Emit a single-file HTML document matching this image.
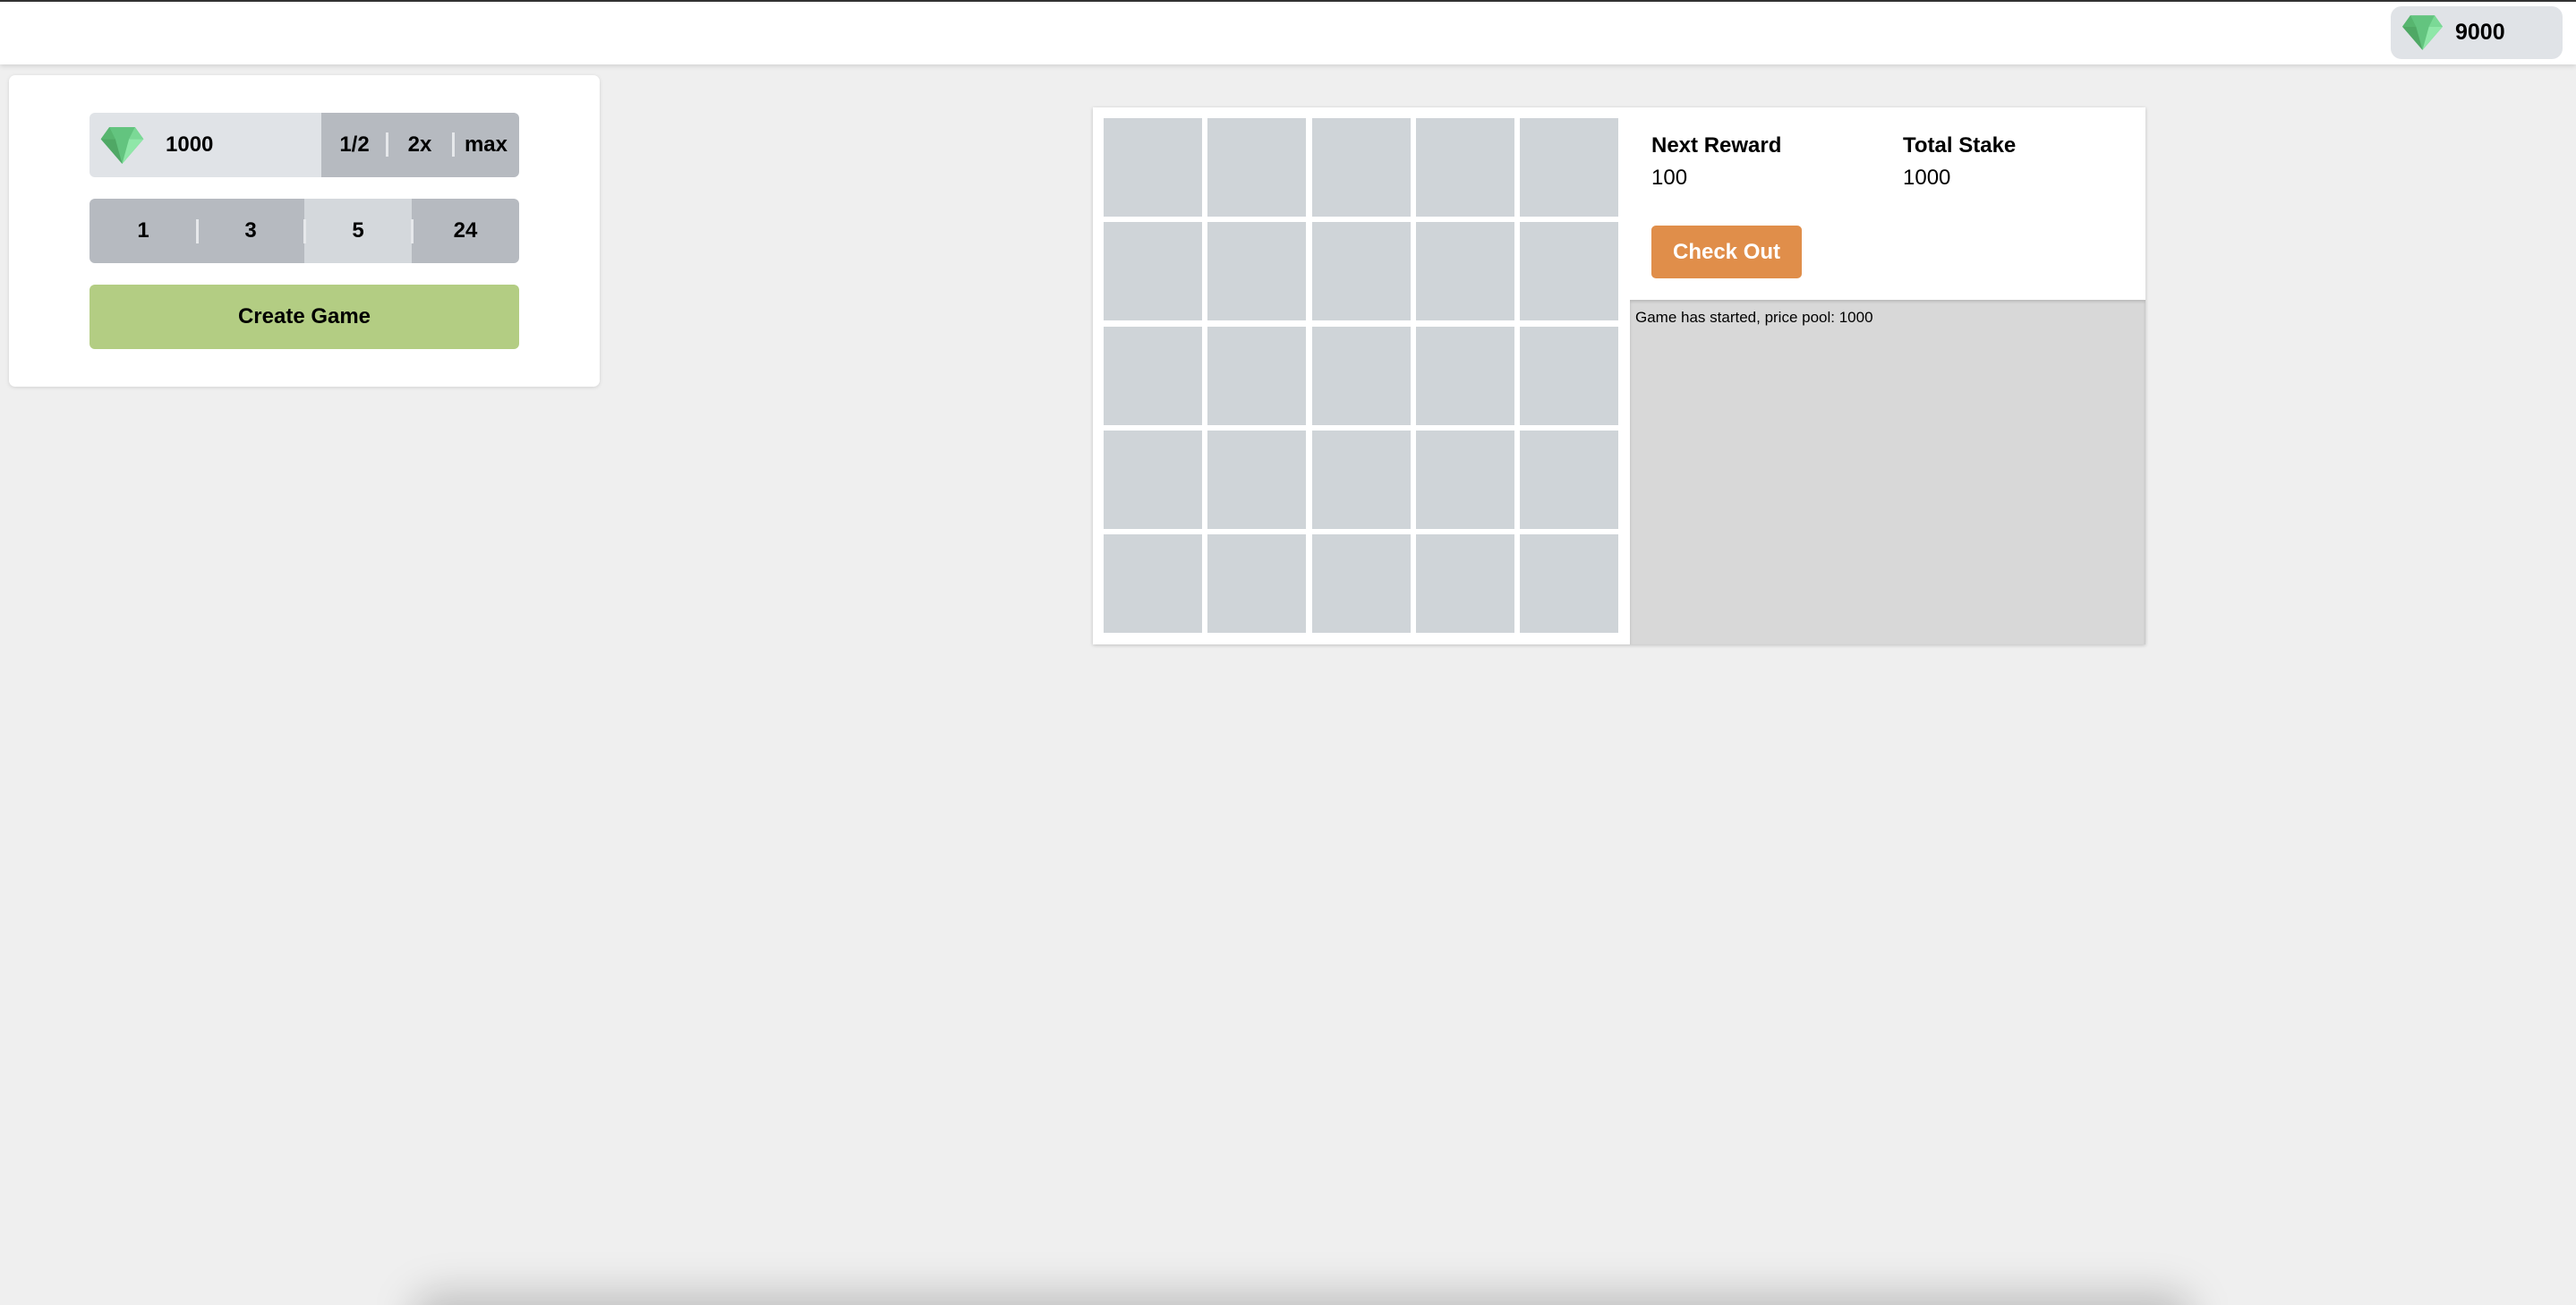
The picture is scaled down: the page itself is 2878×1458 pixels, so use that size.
<!DOCTYPE html>
<html style="width:2878px;height:1458px;overflow:hidden"><head><style>
*{box-sizing:border-box;margin:0;padding:0}
body{width:2878px;height:1458px;background:#efefef;font-family:"Liberation Sans",Arial,sans-serif;position:relative;overflow:hidden;color:#000}
.abs{position:absolute}
.top{left:0;top:0;width:2878px;height:72px;background:#fff;border-top:2px solid #333;box-shadow:0 2px 5px rgba(0,0,0,.12)}
.badge{left:2671px;top:7px;width:192px;height:59px;background:#e0e3e7;border-radius:12px}
.panel{left:10px;top:84px;width:660px;height:348px;background:#fff;border-radius:7px;box-shadow:0 1px 4px rgba(0,0,0,.12)}
.row{display:flex;align-items:center;justify-content:center;font-weight:bold;font-size:24px}
.sep{width:3px;height:27px;background:#e6e8eb}
.cell{position:absolute;width:110px;height:110px;background:#cfd4d8}
.clip{left:0;top:0;width:2878px;height:1458px;overflow:hidden}
.bot{left:460px;top:1445px;width:1990px;height:60px;background:rgba(0,0,0,.2);filter:blur(22px);border-radius:40px}
</style></head><body>
<div class="abs clip"><div class="abs bot"></div></div>
<div class="abs top"></div>
<div class="abs badge"></div>
<svg class="abs" style="left:2684px;top:17px" width="45" height="39" viewBox="0 0 50 43"><polygon points="10,0 40,0 50,14 25,43 0,14" fill="#63c47f"/><polygon points="0,14 25,43 17,14" fill="#4fa865"/><polygon points="33,14 50,14 25,43" fill="#8fe7a8"/><polygon points="10,0 17,14 0,14" fill="#57b56f"/><polygon points="40,0 50,14 33,14" fill="#7bd996"/></svg>
<div class="abs" style="left:2743px;top:22px;font-size:25px;font-weight:bold">9000</div>

<div class="abs panel"></div>
<div class="abs" style="left:100px;top:126px;width:259px;height:72px;background:#e0e3e7;border-radius:6px 0 0 6px"></div>
<div class="abs" style="left:359px;top:126px;width:221px;height:72px;background:#b6bac0;border-radius:0 6px 6px 0"></div>
<div class="abs row" style="left:366px;top:126px;width:60px;height:72px">1/2</div>
<div class="abs row" style="left:439px;top:126px;width:60px;height:72px">2x</div>
<div class="abs row" style="left:513px;top:126px;width:60px;height:72px">max</div>
<div class="abs sep" style="left:431px;top:148px"></div>
<div class="abs sep" style="left:505px;top:148px"></div>
<svg class="abs" style="left:112px;top:142px" width="49" height="41" viewBox="0 0 50 43"><polygon points="10,0 40,0 50,14 25,43 0,14" fill="#63c47f"/><polygon points="0,14 25,43 17,14" fill="#4fa865"/><polygon points="33,14 50,14 25,43" fill="#8fe7a8"/><polygon points="10,0 17,14 0,14" fill="#57b56f"/><polygon points="40,0 50,14 33,14" fill="#7bd996"/></svg>
<div class="abs" style="left:185px;top:148px;font-size:24px;font-weight:bold">1000</div>

<div class="abs row" style="left:100px;top:222px;width:120px;height:72px;background:#b6bac0;border-radius:6px 0 0 6px">1</div>
<div class="abs row" style="left:220px;top:222px;width:120px;height:72px;background:#b6bac0">3</div>
<div class="abs row" style="left:340px;top:222px;width:120px;height:72px;background:#d4d8dc">5</div>
<div class="abs row" style="left:460px;top:222px;width:120px;height:72px;background:#b6bac0;border-radius:0 6px 6px 0">24</div>
<div class="abs sep" style="left:219px;top:245px"></div>
<div class="abs sep" style="left:339px;top:245px"></div>
<div class="abs sep" style="left:459px;top:245px"></div>
<div class="abs row" style="left:100px;top:318px;width:480px;height:72px;background:#b3cd83;border-radius:6px">Create Game</div>

<div class="abs" style="left:1221px;top:120px;width:1176px;height:600px;background:#fff;box-shadow:0 1px 4px rgba(0,0,0,.2)"></div>
<div class="abs" style="left:1821px;top:335px;width:576px;height:385px;background:#d8d8d8;box-shadow:inset 0 2px 3px rgba(0,0,0,.15)"></div>
<div class="abs" style="left:1845px;top:149px;font-size:24px;font-weight:bold">Next Reward</div>
<div class="abs" style="left:2126px;top:149px;font-size:24px;font-weight:bold">Total Stake</div>
<div class="abs" style="left:1845px;top:185px;font-size:24px">100</div>
<div class="abs" style="left:2126px;top:185px;font-size:24px">1000</div>
<div class="abs row" style="left:1845px;top:252px;width:168px;height:59px;background:#e08e4a;color:#fff;border-radius:5px">Check Out</div>
<div class="abs" style="left:1827px;top:345px;font-size:17px">Game has started, price pool: 1000</div>

<div class="cell" style="left:1233px;top:132px"></div><div class="cell" style="left:1349px;top:132px"></div><div class="cell" style="left:1466px;top:132px"></div><div class="cell" style="left:1582px;top:132px"></div><div class="cell" style="left:1698px;top:132px"></div>
<div class="cell" style="left:1233px;top:248px"></div><div class="cell" style="left:1349px;top:248px"></div><div class="cell" style="left:1466px;top:248px"></div><div class="cell" style="left:1582px;top:248px"></div><div class="cell" style="left:1698px;top:248px"></div>
<div class="cell" style="left:1233px;top:365px"></div><div class="cell" style="left:1349px;top:365px"></div><div class="cell" style="left:1466px;top:365px"></div><div class="cell" style="left:1582px;top:365px"></div><div class="cell" style="left:1698px;top:365px"></div>
<div class="cell" style="left:1233px;top:481px"></div><div class="cell" style="left:1349px;top:481px"></div><div class="cell" style="left:1466px;top:481px"></div><div class="cell" style="left:1582px;top:481px"></div><div class="cell" style="left:1698px;top:481px"></div>
<div class="cell" style="left:1233px;top:597px"></div><div class="cell" style="left:1349px;top:597px"></div><div class="cell" style="left:1466px;top:597px"></div><div class="cell" style="left:1582px;top:597px"></div><div class="cell" style="left:1698px;top:597px"></div>
</body></html>
